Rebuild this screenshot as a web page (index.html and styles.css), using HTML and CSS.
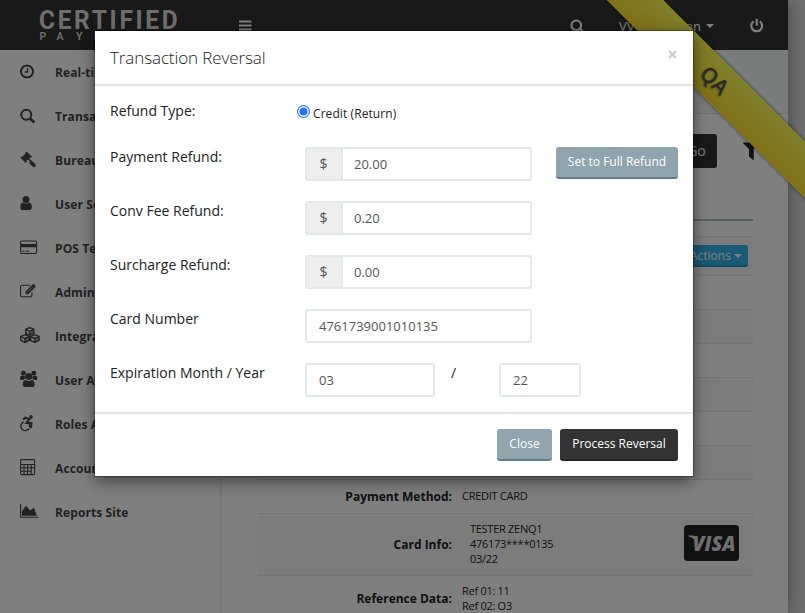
FILE: index.html
```html
<!DOCTYPE html>
<html lang="en">
<head>
<meta charset="utf-8">
<title>Transaction Reversal</title>
<link rel="stylesheet" href="styles.css">
</head>
<body>
<div class="app">
  <header class="topbar">
    <svg class="logo" width="140" height="34" viewBox="0 0 140 34">
      <text class="logo-main" transform="scale(.94 1)" x="0" y="21.500" textLength="147.500">CERTIFIED</text>
      <text class="logo-sub" y="32.500" x="0.500 17.500 37 55">PAYM</text>
    </svg>
    <svg class="menu" width="13" height="12"><path d="M0 1.5h12.5M0 5.5h12.5M0 9.5h12.5" stroke="#fff" stroke-width="2"/></svg>
    <svg class="top-search" width="16" height="16" fill="none" stroke="#fff" stroke-width="2.2"><circle cx="6.3" cy="6.3" r="4.8"/><path d="M9.8 9.8l3.2 3.2" stroke-width="3"/></svg>
    <span class="account"><span>VV</span><span class="account-end">an</span><i class="caret"></i></span>
    <svg class="power" width="14" height="14" fill="none" stroke="#fff" stroke-width="2.2"><path d="M3.6 2.4a5.4 5.4 0 1 0 6.200 0M6.7 0v6.8"/></svg>
  </header>
  <div class="columns">
    <nav class="sidebar">
      <a><svg viewBox="0 0 20 20"><circle cx="7" cy="9.5" r="6" class="s2"/><path class="s15" d="M7.6 6v4H4.7"/></svg>Real-ti</a>
      <a><svg viewBox="0 0 20 20"><circle cx="6.3" cy="8.7" r="5" class="s2"/><path d="M10 12.4l4.3 4.2" stroke="#444" stroke-width="2.8"/></svg>Transa</a>
      <a><svg viewBox="0 0 20 20"><path d="M6.500 1.800l5 5-1.200.8-.6-.2L6.400 10.700l.2.7-.8 1.200-5-5 1.100-.9.7.2 3.300-3.300-.2-.7z" stroke="#444" stroke-width=".8"/><path d="M8.300 9l2.200 1.900 4.200 4.600" fill="none" stroke="#444" stroke-width="1.600"/><path d="M11.200 12.700l2.700 2.600" fill="none" stroke="#444" stroke-width="3.600" stroke-linecap="round"/></svg>Bureau</a>
      <a><svg viewBox="0 0 20 20"><circle cx="6" cy="5.500" r="3.500"/><path d="M3 8.500q3 2 6 0 2.800.3 2.800 4.500 0 3-2.400 3H2.600Q.3 16 .3 13q0-4.200 2.700-4.500z"/></svg>User Se</a>
      <a><svg viewBox="0 0 20 20"><rect x=".6" y="3" width="16" height="12.500" rx="1.300" class="s1"/><path d="M.5 6h16.300v3.300H.5zM2 12.800h2.500v1H2zM5.700 12.800h3.400v1H5.700z"/></svg>POS Te</a>
      <a><svg viewBox="0 0 20 20"><path class="s1" d="M10 3.300H2.500q-2 0-2 2v7.500q0 2 2 2H10q2 0 2-2V10.500"/><path d="M5.500 9.500l7-7q1-.8 1.900.1l.8.8q.8.900 0 1.800l-7 7H5.500z"/><path d="M6.500 10.500l1 1M8 9.500L12.500 5" stroke="#fff" stroke-width=".6"/></svg>Admin</a>
      <a><svg viewBox="0 0 20 20"><g class="s15"><path d="M9.800 1.600l4 1.700v4l-4 1.800-4-1.800v-4zM5 8.700l4.300 1.700v4L5 16.500.8 14.400v-4zM14.800 8.700l4.300 1.700v4l-4.300 2.100-4.300-2.100v-4z"/><path d="M5.800 3.500l4 1.800 4-1.800M9.800 5.300v3.600M.8 10.600L5 12.400l4.300-1.800M5 12.400v4M10.500 10.600l4.300 1.800 4.300-1.800M14.800 12.400v4"/></g><path d="M9.800 5.300l4-1.800v3.800l-4 1.800zM5 12.400l4.300-1.800v3.800L5 16.500zM14.800 12.400l4.300-1.800v3.800l-4.300 2.100z" opacity=".45"/></svg>Integra</a>
      <a><svg viewBox="0 0 20 20"><circle cx="3.400" cy="3.200" r="2.400"/><circle cx="13.900" cy="3.200" r="2.400"/><path d="M1.300 5.800h3.400l.3 3L3.300 10H1.200Q0 10 0 8.500 0 6 1.300 5.800zM12.700 5.800H16q1.300.2 1.300 2.700 0 1.500-1.200 1.500H14l-1.700-1.200z"/><circle cx="8.700" cy="6.500" r="3.500"/><path d="M5.500 10q3.200 1.800 6.400 0 2.800.6 2.800 4.800 0 2.300-2.200 2.300H4.900q-2.200 0-2.200-2.300 0-4.200 2.800-4.800z"/></svg>User A</a>
      <a><svg viewBox="0 0 20 20"><circle cx="11" cy="2.900" r="1.800"/><path class="s2" d="M3 5.600l2.500-2 4 1.500-3 3.800h5l-.5 5.300"/><path class="s15" d="M3.500 8a4.500 4.500 0 1 0 5.800 6.300"/><path class="s15" d="M6 7.500a4.600 4.600 0 0 1 3.500 6"/></svg>Roles A</a>
      <a><svg viewBox="0 0 20 20"><rect x=".6" y="1.600" width="14" height="15" rx="1" class="s1"/><path class="s1" d="M.6 6.500h14M.6 9.800h14M.6 13.200h10.500M4 6.500v10M7.600 6.500v10M11.200 6.500v10"/></svg>Accoun</a>
      <a><svg viewBox="0 0 20 20"><path class="s1" d="M.6 2v13.200h17.700"/><path d="M2 13.700V9l4-5.200 4 4.600 4-2.600 2.900 7.900z"/></svg>Reports Site</a>
    </nav>
    <main class="content">
      <div class="pagehead"></div>
      <div class="searchline">
        <button class="go">Go</button>
        <svg width="20" height="20" viewBox="0 0 20 20" fill="#222"><path d="M.5.5h17L11.700 7v11.500L7 14.500V7z"/></svg>
      </div>
      <div class="details">
        <div class="row actions"><button class="act">Actions <i class="caret"></i></button></div>
        <div class="row"></div><div class="row"></div><div class="row"></div>
        <div class="row"></div><div class="row"></div><div class="row"></div>
        <div class="row"><b>Payment Method:</b><span>CREDIT CARD</span></div>
        <div class="row card"><b>Card Info:</b><span>TESTER ZENQ1<br>476173****0135<br>03/22</span>
          <svg class="visa" width="55" height="36"><rect width="55" height="36" rx="3.500" fill="#222"/><text x="8.500" y="26" textLength="43" lengthAdjust="spacingAndGlyphs">VISA</text><path d="M3.500 10.500h6q2.500 0 3 2.500l1.500 6q-3.500-6-10.500-8z" fill="#ddd"/></svg>
        </div>
        <div class="row ref"><b>Reference Data:</b><span>Ref 01: 11<br>Ref 02: O3</span></div>
      </div>
    </main>
  </div>
</div>
<div class="ribbon-clip"><div class="ribbon">QA</div></div>
<div class="backdrop"></div>
<section class="modal">
  <header class="modal-head"><h4>Transaction Reversal</h4><svg width="9" height="9"><path d="M1 1l7 7M8 1L1 8" stroke="#ccc" stroke-width="2.200"/></svg></header>
  <div class="modal-body">
    <div class="field type"><label>Refund Type:</label><span class="radio"><i></i>Credit (Return)</span></div>
    <div class="field"><label>Payment Refund:</label><div class="input"><em>$</em><span>20.00</span></div><button class="btn full">Set to Full Refund</button></div>
    <div class="field"><label>Conv Fee Refund:</label><div class="input"><em>$</em><span>0.20</span></div></div>
    <div class="field"><label>Surcharge Refund:</label><div class="input"><em>$</em><span>0.00</span></div></div>
    <div class="field"><label>Card Number</label><div class="input plain"><span>4761739001010135</span></div></div>
    <div class="field"><label>Expiration Month / Year</label><div class="input plain month"><span>03</span></div><span class="slash">/</span><div class="input plain year"><span>22</span></div></div>
  </div>
  <footer class="modal-foot"><button class="btn close">Close</button><button class="btn dark">Process Reversal</button></footer>
</section>
</body>
</html>
```
FILE: styles.css
```css
* { box-sizing: border-box; }
body { margin: 0; width: 805px; height: 613px; overflow: hidden; position: relative; background: #dedede; font-family: "Open Sans", sans-serif; font-size: 13px; color: #222; }
button { font-family: inherit; border: 0; margin: 0; padding: 0; white-space: nowrap; }
i, em { font-style: normal; }
.app { width: 788px; height: 613px; background: #fff; box-shadow: 0 0 16px rgba(0,0,0,.4); overflow: visible; }
.topbar { height: 50px; background: #333; color: #fff; display: flex; align-items: flex-start; padding-left: 39px; }
.logo { margin-top: 7px; }
.logo text { font-family: Roboto, sans-serif; font-weight: 700; fill: #ddd; }
.logo .logo-main { font-size: 26px; }
.logo .logo-sub { font-size: 10.5px; font-weight: 600; }
.menu { margin: 20px 0 0 60px; }
.top-search { margin: 19px 0 0 318px; }
.account { display: flex; align-items: center; margin: 17px 0 0 33px; height: 18px; width: 95px; }
.account-end { margin-left: auto; }
.caret { display: inline-block; border: 4px solid transparent; border-top-color: currentColor; border-bottom: 0; margin-left: 5px; vertical-align: 2px; }
.power { margin: 19px 0 0 36px; }
.columns { display: flex; height: 563px; overflow: hidden; }
.sidebar { width: 222px; border-right: 2px solid #eee; flex: none; }
.sidebar a { display: flex; align-items: center; height: 44px; padding: 1px 0 0 20px; font-weight: 700; font-size: 12px; letter-spacing: .1px; color: #444; white-space: nowrap; overflow: hidden; }
.sidebar svg { width: 20px; height: 20px; margin: -1px 15px 0 0; fill: #444; }
.s1, .s15, .s2 { fill: none; stroke: #444; stroke-width: 1.1; }
.s15 { stroke-width: 1.4; }
.s2 { stroke-width: 2; }
.content { flex: 1; min-width: 0; }
.pagehead { height: 64px; background: #f4f8f8; border-bottom: 1px solid #e4e8e8; }
.searchline { margin: 0 35px; height: 107px; border-bottom: 2px solid #b4bfc4; padding: 20px 0 0 423px; display: flex; align-items: flex-start; }
.go { width: 37px; height: 34px; border-radius: 3px; background: #333; color: #fff; font-size: 14px; line-height: 32px; padding: 0 4px 0 0; flex: none; }
.searchline svg { margin: 8px -7px 0 25px; flex: none; }
.details { margin: 15px 35px 0; }
.row { height: 34px; border-top: 1px solid #eaeaea; display: flex; align-items: center; }
.row:nth-child(odd) { background: #f9f9f9; }
.row b { width: 195px; text-align: right; font-size: 12px; }
.row span { margin-left: 10px; margin-top: -2px; font-size: 11px; line-height: 15px; letter-spacing: -.28px; }
.row.actions { height: 39px; justify-content: flex-end; padding-right: 5px; }
.act { width: 64px; height: 22px; border-radius: 2px; background: #32b5e8; border-bottom: 2px solid #2298c9; color: #fff; font-size: 12px; line-height: 19px; }
.act .caret { margin-left: 0; }
.row.card { height: 62px; }
.row.card span { margin-left: 18px; }
.visa { margin-left: auto; margin-right: 14px; margin-top: -3px; }
.visa text { font: italic 800 21px "Open Sans", sans-serif; fill: #ddd; }
.row.ref { height: 46px; }
.ribbon-clip { position: absolute; inset: 0; overflow: hidden; }
.ribbon { position: absolute; left: 515px; top: 60px; width: 400px; height: 40px; transform: rotate(45deg); background: linear-gradient(#ffff58, #ffe42d); box-shadow: 0 0 4px rgba(0,0,0,.6); text-align: center; line-height: 40px; font-size: 21px; font-weight: 600; color: #555; text-shadow: 0 1px 2px rgba(0,0,0,.4); }
.backdrop { position: absolute; inset: 0; background: rgba(0,0,0,.5); }
.modal { position: absolute; left: 95px; top: 31px; width: 598px; height: 445px; background: #fff; box-shadow: 0 5px 15px rgba(0,0,0,.5), 0 0 0 1px rgba(0,0,0,.3); }
.modal-head { height: 55px; border-bottom: 2px solid #e5e5e5; display: flex; justify-content: space-between; padding: 15px 16px 0 15px; }
.modal-head h4 { margin: 0; font-size: 17px; letter-spacing: -.1px; line-height: 24px; font-weight: 300; }
.modal-head svg { margin-top: 4px; }
.modal-body { padding: 15px; height: 326px; }
.field { display: flex; height: 54px; align-items: flex-start; }
.field.type { height: 46px; }
.field label { width: 195px; font-size: 14px; line-height: 20px; flex: none; }
.radio { display: flex; align-items: center; margin: 2px 0 0 -8px; font-size: 12px; letter-spacing: .08px; height: 20px; }
.radio i { width: 13px; height: 13px; border: 1px solid #2574ff; border-radius: 50%; background: #2574ff; box-shadow: inset 0 0 0 1.500px #fff; margin: -4px 3px 0 0; }
.input { width: 227px; height: 34px; border: 2px solid #e6e9ec; border-radius: 3px; display: flex; font-size: 13px; line-height: 31px; color: #555; }
.input em { width: 36px; background: #eee; border-right: 2px solid #e6e9ec; text-align: center; font-size: 14px; line-height: 29px; padding-right: 1px; }
.input span { padding-left: 11px; }
.input.plain span { padding-left: 12px; }
.field .month { width: 130px; }
.field .year { width: 82px; }
.slash { width: 64px; padding-left: 16px; font-size: 14px; line-height: 20px; }
.btn { height: 32px; border-radius: 3px; background: #90a4ae; border-bottom: 2px solid #607d8b; color: #fff; font-size: 12px; line-height: 30px; }
.full { width: 122px; margin-left: 24px; }
.modal-foot { border-top: 2px solid #e5e5e5; padding: 15px; display: flex; justify-content: flex-end; gap: 8px; }
.close { width: 55px; }
.dark { width: 118px; background: #333; border-color: #262626; }
```
